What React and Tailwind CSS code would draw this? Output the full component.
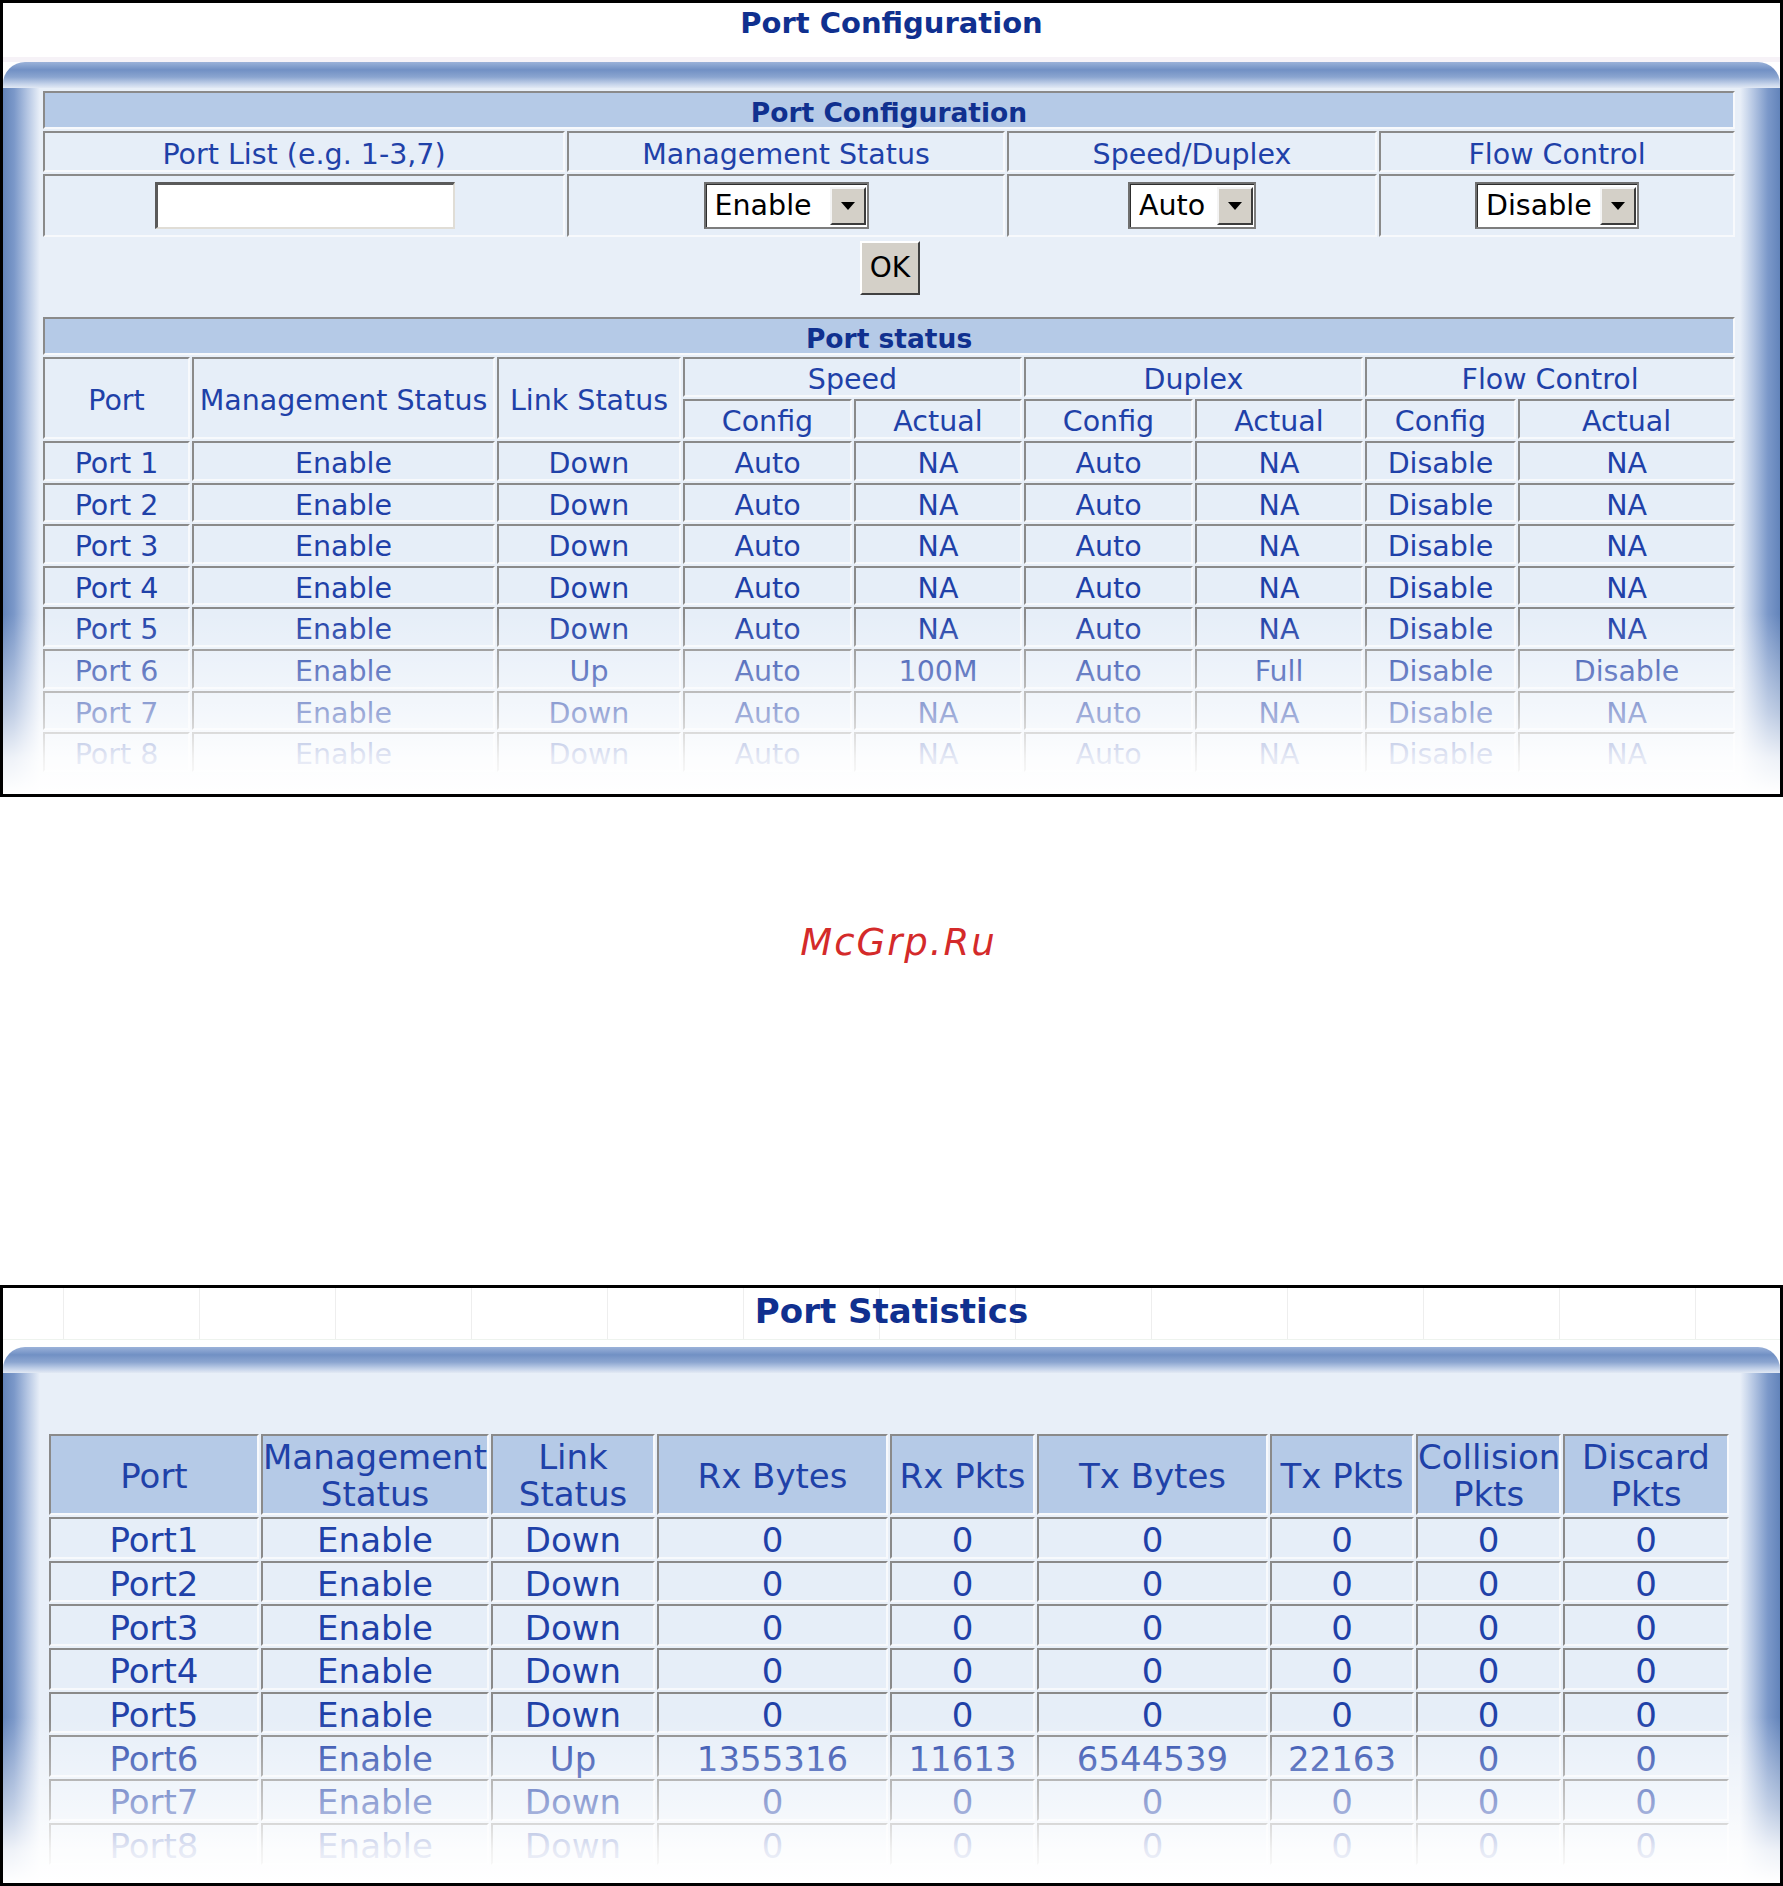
import React from "react";

const cell =
  "p-0 text-center align-middle border-2 border-t-[#8a8a8a] border-l-[#8a8a8a] border-b-[#f7f9fc] border-r-[#f7f9fc]";
const cT = `${cell} pt-[7px]`;
const cB = `${cell} pt-[5px]`;
const cH = `${cell} pt-[3px]`;
const light = "bg-[#e6eef8]";
const head = "bg-[#b5cae7]";
const txt = "text-[#1f41a8]";

function TopBar() {
  return (
    <div className="h-[26px] rounded-t-[22px] bg-[linear-gradient(to_bottom,#9bb2d9,#7190c4_30%,#8ba5d0_58%,#c5d3ea_85%,#e2e9f4)]" />
  );
}

function LeftBar() {
  return (
    <div className="w-[37px] shrink-0 bg-[linear-gradient(to_right,#6384ba,#7b98c9_30%,#b7c8e4_68%,#e9eff8)]" />
  );
}

function RightBar() {
  return (
    <div className="w-[40px] shrink-0 bg-[linear-gradient(to_left,#6384ba,#7b98c9_30%,#b7c8e4_68%,#e9eff8)]" />
  );
}

function Select({ boxW, label }) {
  return (
    <div className={`flex h-[47px] ${boxW} border-2 border-[#6f6f6f] border-b-[#7d7d7d] border-r-[#7d7d7d] bg-white`}>
      <div className="flex flex-1 items-center border-l border-t border-[#2e2e2e]">
        <span className="flex-1 pl-[8px] text-left text-[28.5px] leading-none text-black">{label}</span>
        <div className="mr-[1px] flex h-[38px] w-[36px] items-center justify-center border-2 border-l-[#f4f4f4] border-t-[#f4f4f4] border-b-[#3c3c3c] border-r-[#3c3c3c] bg-[#d4d0c8]">
          <div className="h-0 w-0 border-l-[7px] border-r-[7px] border-t-[8px] border-l-transparent border-r-transparent border-t-black" />
        </div>
      </div>
    </div>
  );
}

function Fade({ h }) {
  return (
    <div
      className={`pointer-events-none absolute bottom-0 left-0 right-0 ${h} bg-[linear-gradient(to_bottom,rgba(255,255,255,0),rgba(255,255,255,0.55)_55%,rgba(255,255,255,0.88)_80%,#ffffff)]`}
    />
  );
}

const statusRows = [
  ["Port 1", "Enable", "Down", "Auto", "NA", "Auto", "NA", "Disable", "NA"],
  ["Port 2", "Enable", "Down", "Auto", "NA", "Auto", "NA", "Disable", "NA"],
  ["Port 3", "Enable", "Down", "Auto", "NA", "Auto", "NA", "Disable", "NA"],
  ["Port 4", "Enable", "Down", "Auto", "NA", "Auto", "NA", "Disable", "NA"],
  ["Port 5", "Enable", "Down", "Auto", "NA", "Auto", "NA", "Disable", "NA"],
  ["Port 6", "Enable", "Up", "Auto", "100M", "Auto", "Full", "Disable", "Disable"],
  ["Port 7", "Enable", "Down", "Auto", "NA", "Auto", "NA", "Disable", "NA"],
  ["Port 8", "Enable", "Down", "Auto", "NA", "Auto", "NA", "Disable", "NA"],
];

const statRows = [
  ["Port1", "Enable", "Down", "0", "0", "0", "0", "0", "0"],
  ["Port2", "Enable", "Down", "0", "0", "0", "0", "0", "0"],
  ["Port3", "Enable", "Down", "0", "0", "0", "0", "0", "0"],
  ["Port4", "Enable", "Down", "0", "0", "0", "0", "0", "0"],
  ["Port5", "Enable", "Down", "0", "0", "0", "0", "0", "0"],
  ["Port6", "Enable", "Up", "1355316", "11613", "6544539", "22163", "0", "0"],
  ["Port7", "Enable", "Down", "0", "0", "0", "0", "0", "0"],
  ["Port8", "Enable", "Down", "0", "0", "0", "0", "0", "0"],
];

function PortConfigPanel() {
  return (
    <div className="relative h-[797px] overflow-hidden border-[3px] border-black bg-white">
      <div className="flex h-[54px] justify-center pt-[6px]">
        <span className="text-[29px] font-bold leading-none text-[#10308f]">Port Configuration</span>
      </div>
      <div className="h-[5px] bg-[#f6f2f7]" />
      <TopBar />
      <div className="flex h-[706px]">
        <LeftBar />
        <div className="w-[1700px] bg-[#e8eff8] pt-[1px]">
          <table className={`ml-[1px] w-[1696px] table-fixed border-separate border-spacing-[2px] ${txt}`}>
            <colgroup>
              <col className="w-[522px]" />
              <col className="w-[438px]" />
              <col className="w-[370px]" />
              <col className="w-[356px]" />
            </colgroup>
            <tbody>
              <tr>
                <td colSpan={4} className={`${cT} ${head} h-[38px] text-[26.5px] font-bold leading-none text-[#10308f]`}>
                  Port Configuration
                </td>
              </tr>
              <tr className="text-[28.5px] leading-none">
                <td className={`${cT} ${light} h-[41px]`}>Port List (e.g. 1-3,7)</td>
                <td className={`${cT} ${light}`}>Management Status</td>
                <td className={`${cT} ${light}`}>Speed/Duplex</td>
                <td className={`${cT} ${light}`}>Flow Control</td>
              </tr>
              <tr>
                <td className={`${cell} ${light} h-[63px]`}>
                  <div className="flex justify-center pl-[1px]">
                    <div className="h-[47px] w-[300px] border-l-[3px] border-t-[3px] border-b-2 border-r-2 border-l-[#5a5a5a] border-t-[#5a5a5a] border-b-[#e0ddd6] border-r-[#e0ddd6] bg-white" />
                  </div>
                </td>
                <td className={`${cell} ${light}`}>
                  <div className="flex justify-center">
                    <Select boxW="w-[165px]" label="Enable" />
                  </div>
                </td>
                <td className={`${cell} ${light}`}>
                  <div className="flex justify-center">
                    <Select boxW="w-[128px]" label="Auto" />
                  </div>
                </td>
                <td className={`${cell} ${light}`}>
                  <div className="flex justify-center">
                    <Select boxW="w-[164px]" label="Disable" />
                  </div>
                </td>
              </tr>
            </tbody>
          </table>
          <div className="flex h-[76px] justify-center pt-[2px]">
            <div className="flex h-[54px] w-[60px] items-center justify-center border-2 border-l-[#ffffff] border-t-[#ffffff] border-b-[#404040] border-r-[#404040] bg-[#d4d0c8] text-[28px] leading-none text-black">
              OK
            </div>
          </div>
          <table className={`ml-[1px] w-[1696px] table-fixed border-separate border-spacing-[2px] ${txt}`}>
            <colgroup>
              <col className="w-[147px]" />
              <col className="w-[303px]" />
              <col className="w-[184px]" />
              <col className="w-[169px]" />
              <col className="w-[168px]" />
              <col className="w-[169px]" />
              <col className="w-[168px]" />
              <col className="w-[151px]" />
              <col className="w-[217px]" />
            </colgroup>
            <tbody className="text-[28.5px] leading-none">
              <tr>
                <td colSpan={9} className={`${cT} ${head} h-[38px] text-[26.5px] font-bold text-[#10308f]`}>
                  Port status
                </td>
              </tr>
              <tr>
                <td rowSpan={2} className={`${cT} ${light}`}>Port</td>
                <td rowSpan={2} className={`${cT} ${light} whitespace-nowrap`}>Management Status</td>
                <td rowSpan={2} className={`${cT} ${light} whitespace-nowrap`}>Link Status</td>
                <td colSpan={2} className={`${cT} ${light} h-[40px]`}>Speed</td>
                <td colSpan={2} className={`${cT} ${light}`}>Duplex</td>
                <td colSpan={2} className={`${cT} ${light}`}>Flow Control</td>
              </tr>
              <tr>
                <td className={`${cT} ${light} h-[40px]`}>Config</td>
                <td className={`${cT} ${light}`}>Actual</td>
                <td className={`${cT} ${light}`}>Config</td>
                <td className={`${cT} ${light}`}>Actual</td>
                <td className={`${cT} ${light}`}>Config</td>
                <td className={`${cT} ${light}`}>Actual</td>
              </tr>
              {statusRows.map((r) => (
                <tr key={r[0]}>
                  {r.map((c, i) => (
                    <td key={i} className={`${cT} ${light} h-[39.6px]`}>
                      {c}
                    </td>
                  ))}
                </tr>
              ))}
            </tbody>
          </table>
        </div>
        <RightBar />
      </div>
      <Fade h="h-[180px]" />
    </div>
  );
}

function PortStatsPanel() {
  const grid = [0, 1, 2, 3, 4, 5, 6, 7, 8, 9, 10, 11, 12];
  return (
    <div className="relative h-[601px] overflow-hidden border-[3px] border-black bg-white">
      <div className="relative h-[59px]">
        <div className="absolute left-0 right-0 top-0 flex h-[52px] border-b border-[#eef3ee] pl-[60px]">
          {grid.map((g) => (
            <div key={g} className="h-full w-[136px] shrink-0 border-l border-[#eeeeee]" />
          ))}
        </div>
        <div className="relative flex justify-center pt-[6px]">
          <span className="text-[34px] font-bold leading-none text-[#10308f]">Port Statistics</span>
        </div>
      </div>
      <TopBar />
      <div className="flex h-[510px]">
        <LeftBar />
        <div className="w-[1700px] bg-[#e8eff8] pt-[59px]">
          <table className={`ml-[7px] w-[1684px] table-fixed border-separate border-spacing-[2px] text-[34px] ${txt}`}>
            <colgroup>
              <col className="w-[210px]" />
              <col className="w-[228px]" />
              <col className="w-[164px]" />
              <col className="w-[231px]" />
              <col className="w-[145px]" />
              <col className="w-[231px]" />
              <col className="w-[144px]" />
              <col className="w-[145px]" />
              <col className="w-[166px]" />
            </colgroup>
            <tbody>
              <tr className="leading-[37px]">
                <td className={`${cH} ${head} h-[81px]`}>Port</td>
                <td className={`${cH} ${head}`}>
                  Management
                  <br />
                  Status
                </td>
                <td className={`${cH} ${head}`}>
                  Link
                  <br />
                  Status
                </td>
                <td className={`${cH} ${head}`}>Rx Bytes</td>
                <td className={`${cH} ${head}`}>Rx Pkts</td>
                <td className={`${cH} ${head}`}>Tx Bytes</td>
                <td className={`${cH} ${head}`}>Tx Pkts</td>
                <td className={`${cH} ${head}`}>
                  Collision
                  <br />
                  Pkts
                </td>
                <td className={`${cH} ${head}`}>
                  Discard
                  <br />
                  Pkts
                </td>
              </tr>
              {statRows.map((r) => (
                <tr key={r[0]} className="leading-[30px]">
                  {r.map((c, i) => (
                    <td key={i} className={`${cB} ${light} h-[41.7px]`}>
                      {c}
                    </td>
                  ))}
                </tr>
              ))}
            </tbody>
          </table>
        </div>
        <RightBar />
      </div>
      <Fade h="h-[166px]" />
    </div>
  );
}

export default function App() {
  return (
    <div className="w-[1783px] bg-white font-['DejaVu_Sans',sans-serif]">
      <PortConfigPanel />
      <div className="h-[488px] pl-[14px] pt-[127px] text-center">
        <span className="text-[37px] italic leading-none tracking-[2px] text-[#d42a2a]">McGrp.Ru</span>
      </div>
      <PortStatsPanel />
    </div>
  );
}
